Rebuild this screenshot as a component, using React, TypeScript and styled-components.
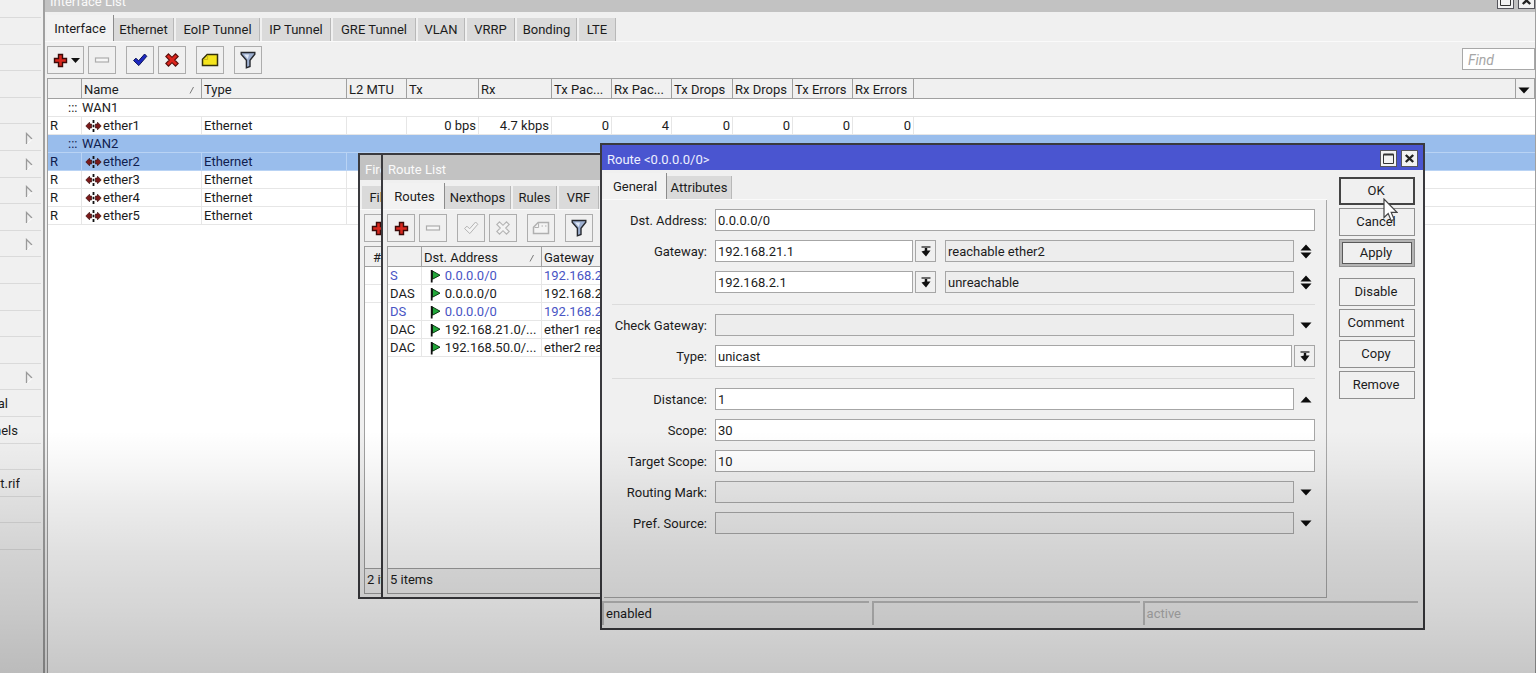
import React, { ReactNode } from "react";
import styled, { createGlobalStyle, css } from "styled-components";

const GlobalStyle = createGlobalStyle`
  * { box-sizing: border-box; }
  html, body, #root { height: 100%; }
  body {
    margin: 0;
    overflow: hidden;
    background: #f0f0f0;
    color: #1c1c1c;
    font: 13px/18px Roboto, "Liberation Sans", sans-serif;
  }
  button, input { font: inherit; color: inherit; }
`;

/* ---------- desktop ---------- */

const Desktop = styled.div`
  position: relative;
  display: flex;
  height: 100vh;
  overflow: hidden;
`;

const Shade = styled.div`
  position: absolute;
  inset: 0;
  z-index: 10;
  pointer-events: none;
  background: linear-gradient(
    to bottom,
    rgba(0, 0, 0, 0) 64%,
    rgba(0, 0, 0, 0.03) 69%,
    rgba(0, 0, 0, 0.07) 74%,
    rgba(0, 0, 0, 0.12) 82%,
    rgba(0, 0, 0, 0.16) 90%,
    rgba(0, 0, 0, 0.22) 100%
  );
`;

const SideMenu = styled.nav`
  flex: none;
  width: 43px;
  height: 550px;
  display: grid;
  grid-template-rows: 18px repeat(20, 1fr);
`;

const SideItem = styled.div`
  display: flex;
  align-items: center;
  justify-content: space-between;
  margin-right: 2px;
  padding: 2px 8px 0 0;
  border-bottom: 1px solid #dadada;
  overflow: hidden;
`;

const SideLabel = styled.span<{ $w: number }>`
  display: flex;
  justify-content: flex-end;
  width: ${(p) => p.$w}px;
  overflow: hidden;
  white-space: nowrap;
`;

/* ---------- window parts ---------- */

const frame = css`
  display: flex;
  flex-direction: column;
  background: #f0f0f0;
`;

const MainWindow = styled.section`
  ${frame}
  flex: 1;
  min-width: 0;
  margin-top: -13px;
  border: 1px solid #a0a0a0;
  border-width: 0 1px 0 2px;
`;

const FloatWindow = styled.section<{ $x: number; $y: number; $w: number; $h: number }>`
  ${frame}
  position: absolute;
  left: ${(p) => p.$x}px;
  top: ${(p) => p.$y}px;
  width: ${(p) => p.$w}px;
  height: ${(p) => p.$h}px;
  border: 2px solid #3a3a3e;
`;

const TitleBar = styled.header<{ $active?: boolean; $flush?: boolean }>`
  flex: none;
  display: flex;
  align-items: center;
  height: 25px;
  padding: 5px ${(p) => (p.$flush ? 0 : 5)}px 0 5px;
  background: ${(p) => (p.$active ? "#4a55d0" : "#c2c2c2")};
  color: ${(p) => (p.$active ? "#eef0ff" : "#fafafa")};
  white-space: nowrap;
`;

const TitleText = styled.h1`
  flex: 1;
  margin: 0;
  font-size: 13px;
  font-weight: 400;
`;

const TitleButton = styled.button`
  display: flex;
  align-items: center;
  justify-content: center;
  width: 17px;
  height: 17px;
  margin: 0 0 4px 4px;
  padding: 0;
  border: 1px solid #55555c;
  background: #f2f2f2;
`;

const TabBar = styled.div`
  flex: none;
  display: flex;
  height: 30px;
  padding: 3px 0 0 2px;
  border-bottom: 1px solid #fafafa;
`;

const Tab = styled.button<{ $w: number; $active?: boolean }>`
  flex: none;
  width: ${(p) => p.$w}px;
  margin: ${(p) => (p.$active ? 0 : "3px 2px 0 0")};
  padding: 1px 0 0;
  border: 0;
  border-right: 1px solid ${(p) => (p.$active ? "#8c8c8c" : "#b8b8b8")};
  background: ${(p) => (p.$active ? "#f2f2f2" : "#dadada")};
  text-align: center;
  white-space: nowrap;
`;

const Toolbar = styled.div<{ $inset: number }>`
  flex: none;
  display: flex;
  gap: 4px;
  padding: 4px 0 4px ${(p) => p.$inset}px;
`;

const ToolButton = styled.button<{ $wide?: boolean; $group?: boolean }>`
  flex: none;
  display: flex;
  align-items: center;
  justify-content: center;
  gap: 2px;
  width: ${(p) => (p.$wide ? 37 : 28)}px;
  height: 28px;
  margin-left: ${(p) => (p.$group ? 6 : 0)}px;
  padding: 0;
  border: 1px solid #adadad;
  background: #f0f0f0;
`;

const FindBox = styled.input`
  width: 73px;
  height: 22px;
  margin: 2px 0 0 auto;
  padding: 2px 5px 0;
  border: 1px solid #a8a8a8;
  background: #fff;
  font-size: 14px;
  font-style: italic;
  &::placeholder { color: #a6a6a6; opacity: 1; }
`;

/* ---------- lists ---------- */

const ListPane = styled.div<{ $inset: number }>`
  flex: 1;
  min-height: 0;
  margin-left: ${(p) => p.$inset}px;
  border-left: 1px solid #a0a0a0;
  background: #fff;
  overflow: hidden;
`;

const Grid = styled.table`
  width: 100%;
  table-layout: fixed;
  border-collapse: separate;
  border-spacing: 0;
  white-space: nowrap;
`;

const HeadCell = styled.th`
  height: 21px;
  padding: 2px 2px 0;
  border: 0 solid #a0a0a0;
  border-width: 1px 1px 1px 0;
  background: #f0f0f0;
  font-weight: 400;
  line-height: 16px;
  text-align: left;
  overflow: hidden;
`;

const HeadFlex = styled.span`
  display: flex;
  align-items: center;
  justify-content: space-between;
  padding-right: 4px;
`;

const Row = styled.tr<{ $selected?: boolean; $blue?: boolean }>`
  background: ${(p) => (p.$selected ? "#99bdec" : "#fff")};
  color: ${(p) => (p.$selected ? "#10204e" : p.$blue ? "#4854c4" : "inherit")};
  --line: ${(p) => (p.$selected ? "#b9d3f4" : "#e6e6e6")};
`;

const Cell = styled.td<{ $right?: boolean; $plain?: boolean }>`
  height: 18px;
  padding: 1px 2px 0;
  border: 0 solid var(--line);
  border-width: ${(p) => (p.$plain ? "0 0 1px" : "0 1px 1px 0")};
  line-height: 16px;
  text-align: ${(p) => (p.$right ? "right" : "left")};
  overflow: hidden;
`;

const IconText = styled.span<{ $pad?: number }>`
  display: flex;
  align-items: center;
  gap: 1px;
  padding-left: ${(p) => p.$pad ?? 1}px;
`;

const CommentMark = styled.span`
  display: inline-block;
  width: 14px;
  margin-left: 18px;
`;

const CountBar = styled.footer`
  flex: none;
  height: 26px;
  margin: 0 0 3px 4px;
  padding: 2px 2px 0;
  border: 1px solid #a0a0a0;
  border-right: 0;
  white-space: nowrap;
  overflow: hidden;
`;

/* ---------- route form ---------- */

const DialogBody = styled.div`
  flex: 1;
  display: flex;
  min-height: 0;
`;

const FormSide = styled.div`
  flex: 1;
  display: flex;
  flex-direction: column;
`;

const Form = styled.form`
  flex: 1;
  display: flex;
  flex-direction: column;
  gap: 9px;
  margin-left: 2px;
  padding: 9px 11px 0 8px;
  border: 1px solid #a8a8a8;
  border-width: 0 1px 1px 0;
`;

const FormRow = styled.div`
  display: grid;
  grid-template-columns: 95px 1fr;
  column-gap: 8px;
  align-items: center;
`;

const Label = styled.label`
  text-align: right;
  padding-top: 1px;
  white-space: nowrap;
`;

const Fields = styled.div`
  display: flex;
`;

const TextBox = styled.input<{ $w?: number; $off?: boolean }>`
  flex: ${(p) => (p.$w ? "none" : "1")};
  width: ${(p) => (p.$w ? p.$w + "px" : "auto")};
  min-width: 0;
  height: 22px;
  padding: 1px 2px 0;
  border: 1px solid #a6a6a6;
  border-radius: 0;
  outline: 0;
  background: ${(p) => (p.$off ? "#ededed" : "#fff")};
`;

const DropButton = styled.button`
  display: flex;
  align-items: center;
  justify-content: center;
  width: 21px;
  height: 22px;
  margin-left: 2px;
  padding: 0;
  border: 1px solid #a6a6a6;
  background: #f0f0f0;
`;

const ArrowButton = styled.button`
  display: flex;
  align-items: center;
  justify-content: center;
  width: 21px;
  height: 22px;
  padding: 1px 0 0 3px;
  border: 0;
  background: none;
`;

const Gap = styled.span`
  width: 9px;
`;

const Separator = styled.hr`
  width: 100%;
  height: 3px;
  margin: 0;
  border: 0;
  border-bottom: 1px solid #dcdcdc;
`;

const Actions = styled.div`
  flex: none;
  display: flex;
  flex-direction: column;
  gap: 3px;
  width: 96px;
  padding: 7px 8px 0 12px;
`;

const ActionButton = styled.button<{ $kind?: "default" | "focus"; $group?: boolean }>`
  height: 28px;
  margin-top: ${(p) => (p.$group ? 8 : 0)}px;
  padding: 0 2px 0 0;
  background: #f0f0f0;
  border: ${(p) => (p.$kind === "default" ? "2px solid #444" : "1px solid #8f8f8f")};
  ${(p) =>
    p.$kind === "focus" &&
    css`
      border: 3px solid #b4b4b4;
      outline: 1px solid #8f8f8f;
      outline-offset: -1px;
      box-shadow: inset 0 0 0 1px #5a5a5a;
    `}
`;

const StatusBar = styled.footer`
  flex: none;
  display: grid;
  grid-template-columns: 33fr 33fr 34fr;
  gap: 3px;
  padding: 3px 5px 3px 0;
`;

const StatusCell = styled.span<{ $dim?: boolean }>`
  height: 24px;
  padding: 2px 2px 0;
  border: 0 solid #bdbdbd;
  border-width: 2px 0 0 2px;
  color: ${(p) => (p.$dim ? "#b4b4b4" : "inherit")};
`;

const Pointer = styled.svg`
  position: absolute;
  left: 1383px;
  top: 198px;
  z-index: 5;
`;

/* ---------- drawings ---------- */

const Plus = () => (
  <svg width="17" height="17" viewBox="0 0 17 17">
    <path d="M6.500 2.500h4v4h4v4h-4v4h-4v-4h-4v-4h4z" fill="#d8281e" stroke="#3c0a08" strokeWidth="1.400" />
  </svg>
);
const Minus = () => (
  <svg width="16" height="16" viewBox="0 0 16 16">
    <rect x="1.500" y="6" width="13" height="4" fill="#f6f6f6" stroke="#adadad" strokeWidth="1.200" />
  </svg>
);
const Check = ({ off }: { off?: boolean }) => (
  <svg width="16" height="16" viewBox="0 0 16 16">
    <path
      d="M1.500 8.500 4 6.200l2.600 2.600L12.600 2l2.200 2.300L6.800 13.600z"
      fill={off ? "#f4f4f4" : "#1c28c0"}
      stroke={off ? "#b4b4b4" : "#0c1458"}
      strokeWidth="1"
    />
  </svg>
);
const Cross = ({ off }: { off?: boolean }) => (
  <svg width="16" height="16" viewBox="0 0 16 16">
    <path
      d="M4.500 1.800 8 5.300l3.500-3.500 2.700 2.700L10.700 8l3.500 3.500-2.700 2.700L8 10.700l-3.500 3.500-2.700-2.700L5.300 8 1.800 4.500z"
      fill={off ? "#f4f4f4" : "#dc241c"}
      stroke={off ? "#b4b4b4" : "#5c100c"}
      strokeWidth="1.100"
    />
  </svg>
);
const Note = ({ off }: { off?: boolean }) => (
  <svg width="18" height="16" viewBox="0 0 18 16">
    <path
      d="M6.200 2.500h10.300v11H1.500V7.200z"
      fill={off ? "#f4f4f4" : "#f4e41c"}
      stroke={off ? "#b0b0b0" : "#33300c"}
      strokeWidth="1.500"
    />
    <path d="M2.500 7.500h4.100V3.200" fill="none" stroke={off ? "#b0b0b0" : "#c8b81c"} strokeWidth="1" />
    {off && <path d="M9.500 6h1.500M13 6h1.500" stroke="#b0b0b0" />}
  </svg>
);
const Funnel = () => (
  <svg width="16" height="18" viewBox="0 0 16 18">
    <path d="M1.200 1.500h13.600v1.800L10 9.200v6.300l-3.600 1.300V9.200L1.200 3.300z" fill="#9dafd0" stroke="#26282e" strokeWidth="1.400" />
    <path d="M4 3.500h5L7.800 8z" fill="#dfe8f6" />
  </svg>
);
const Ether = () => (
  <svg width="17" height="14" viewBox="0 0 17 14">
    <path d="M.8 7 4.500 3.200V5h2v4h-2v1.800z" fill="#7c1a1a" stroke="#3a0e0e" strokeWidth=".7" />
    <path d="M16.200 7 12.500 3.200V5h-2v4h2v1.800z" fill="#7c1a1a" stroke="#3a0e0e" strokeWidth=".7" />
    <path d="M8.500 1v3M8.500 5.800v2.400M8.500 10v3" stroke="#111" strokeWidth="1.800" />
  </svg>
);
const Flag = () => (
  <svg width="11" height="14" viewBox="0 0 11 14">
    <path d="M2.500 2 10 6.200 2.500 10.200z" fill="#22a83a" stroke="#0c3c14" strokeWidth="1" />
    <path d="M1.700 1v12.500" stroke="#111" strokeWidth="1.800" />
  </svg>
);
const SortMark = () => (
  <svg width="6" height="8" viewBox="0 0 6 8">
    <path d="M1 7.500 4.500 1" stroke="#7a7a7a" fill="none" />
  </svg>
);
const SubMark = () => (
  <svg width="8" height="13" viewBox="0 0 8 13">
    <path d="M1.500 12V1.500L7 7" stroke="#9a9a9a" strokeWidth="1.300" fill="none" />
    <path d="M2.500 11.500 7 7.500" stroke="#fff" fill="none" />
  </svg>
);
const Tri = ({ up }: { up?: boolean }) => (
  <svg width="12" height="7" viewBox="0 0 12 7">
    <path d={up ? "M.5 6.500h11L6 .5z" : "M.5.5h11L6 6.500z"} fill="#0c0c0c" />
  </svg>
);
const TinyTri = () => (
  <svg width="9" height="5" viewBox="0 0 9 5">
    <path d="M0 0h9L4.500 5z" fill="#111" />
  </svg>
);
const UpDown = () => (
  <svg width="12" height="15" viewBox="0 0 12 15">
    <path d="M.5 6.500h11L6 .5zM.5 8.500h11L6 14.500z" fill="#0c0c0c" />
  </svg>
);
const DropMark = () => (
  <svg width="10" height="11" viewBox="0 0 10 11">
    <path d="M.5 1h9" stroke="#222" strokeWidth="1.300" />
    <path d="M3.800 2h2.400v2.500H9.500L5 10.500.5 5.500 3.800 4.500z" fill="#111" />
  </svg>
);
const MaxMark = () => (
  <svg width="11" height="11" viewBox="0 0 11 11">
    <path d="M.5 1.500h10v9H.5z" fill="none" stroke="#333" />
    <path d="M.5 1.500h10" stroke="#333" strokeWidth="2" />
  </svg>
);
const CloseMark = () => (
  <svg width="11" height="11" viewBox="0 0 11 11">
    <path d="M1.800 2l7.400 7M9.200 2l-7.400 7" stroke="#222" strokeWidth="2.400" />
  </svg>
);

/* ---------- data ---------- */

const sideRows: { label?: string; w?: number; sub?: boolean }[] = Array.from({ length: 21 }, (_, i) => {
  if ([5, 6, 7, 8, 9, 14].includes(i)) return { sub: true };
  if (i === 15) return { label: "al", w: 8 };
  if (i === 16) return { label: "nels", w: 18 };
  if (i === 18) return { label: "ut.rif", w: 20 };
  return {};
});

const mainTabs: [string, number][] = [
  ["Interface", 67],
  ["Ethernet", 60],
  ["EoIP Tunnel", 84],
  ["IP Tunnel", 69],
  ["GRE Tunnel", 83],
  ["VLAN", 47],
  ["VRRP", 48],
  ["Bonding", 60],
  ["LTE", 37],
];

const mainCols: [string, number][] = [
  ["", 34],
  ["Name", 120],
  ["Type", 145],
  ["L2 MTU", 60],
  ["Tx", 72],
  ["Rx", 73],
  ["Tx Pac...", 60],
  ["Rx Pac...", 60],
  ["Tx Drops", 61],
  ["Rx Drops", 60],
  ["Tx Errors", 60],
  ["Rx Errors", 61],
];

const interfaces = [
  { name: "ether1", comment: "WAN1", stats: ["0 bps", "4.7 kbps", "0", "4", "0", "0", "0", "0"] },
  { name: "ether2", comment: "WAN2", selected: true },
  { name: "ether3" },
  { name: "ether4" },
  { name: "ether5" },
] as { name: string; comment?: string; selected?: boolean; stats?: string[] }[];

const routes = [
  { flags: "S", dst: "0.0.0.0/0", gw: "192.168.21.1", blue: true },
  { flags: "DAS", dst: "0.0.0.0/0", gw: "192.168.21.1" },
  { flags: "DS", dst: "0.0.0.0/0", gw: "192.168.2.1", blue: true },
  { flags: "DAC", dst: "192.168.21.0/...", gw: "ether1 reachable" },
  { flags: "DAC", dst: "192.168.50.0/...", gw: "ether2 reachable" },
];

/* ---------- composed pieces ---------- */

const WindowButtons = () => (
  <>
    <TitleButton aria-label="Maximize"><MaxMark /></TitleButton>
    <TitleButton aria-label="Close"><CloseMark /></TitleButton>
  </>
);

const Tabs = ({ items }: { items: [string, number][] }) => (
  <TabBar>
    {items.map(([t, w], i) => (
      <Tab key={t} $w={w} $active={i === 0}>{t}</Tab>
    ))}
  </TabBar>
);

const Field = ({ id, label, children }: { id: string; label: string; children: ReactNode }) => (
  <FormRow>
    <Label htmlFor={id}>{label}</Label>
    <Fields>{children}</Fields>
  </FormRow>
);

const InterfaceTable = () => (
  <Grid>
    <colgroup>
      {mainCols.map(([n, w]) => <col key={n} width={w} />)}
      <col />
      <col width={19} />
    </colgroup>
    <thead>
      <tr>
        {mainCols.map(([n]) => (
          <HeadCell key={n}>{n === "Name" ? <HeadFlex>{n}<SortMark /></HeadFlex> : n}</HeadCell>
        ))}
        <HeadCell />
        <HeadCell><Tri /></HeadCell>
      </tr>
    </thead>
    <tbody>
      {interfaces.map((r) => (
        <React.Fragment key={r.name}>
          {r.comment && (
            <Row $selected={r.selected}>
              <Cell colSpan={14} $plain><CommentMark>:::</CommentMark>{r.comment}</Cell>
            </Row>
          )}
          <Row $selected={r.selected}>
            <Cell>R</Cell>
            <Cell><IconText><Ether />{r.name}</IconText></Cell>
            <Cell>Ethernet</Cell>
            <Cell />
            {Array.from({ length: 8 }, (_, i) => (
              <Cell key={i} $right>{r.stats?.[i]}</Cell>
            ))}
            <Cell colSpan={2} $plain />
          </Row>
        </React.Fragment>
      ))}
    </tbody>
  </Grid>
);

const RouteTable = () => (
  <Grid>
    <colgroup>
      <col width={34} />
      <col width={120} />
      <col />
    </colgroup>
    <thead>
      <tr>
        <HeadCell />
        <HeadCell><HeadFlex>Dst. Address<SortMark /></HeadFlex></HeadCell>
        <HeadCell>Gateway</HeadCell>
      </tr>
    </thead>
    <tbody>
      {routes.map((r, i) => (
        <Row key={i} $blue={r.blue}>
          <Cell>{r.flags}</Cell>
          <Cell><IconText $pad={6}><Flag /><span>&thinsp;{r.dst}</span></IconText></Cell>
          <Cell>{r.gw}</Cell>
        </Row>
      ))}
    </tbody>
  </Grid>
);

export default function App() {
  return (
    <>
      <GlobalStyle />
      <Desktop>
        <SideMenu>
          {sideRows.map((r, i) => (
            <SideItem key={i}>
              <SideLabel $w={r.w ?? 0}>{r.label}</SideLabel>
              {r.sub && <SubMark />}
            </SideItem>
          ))}
        </SideMenu>

        <MainWindow>
          <TitleBar $flush>
            <TitleText>Interface List</TitleText>
            <WindowButtons />
          </TitleBar>
          <Tabs items={mainTabs} />
          <Toolbar $inset={2}>
            <ToolButton $wide aria-label="Add"><Plus /><TinyTri /></ToolButton>
            <ToolButton aria-label="Remove"><Minus /></ToolButton>
            <ToolButton $group aria-label="Enable"><Check /></ToolButton>
            <ToolButton aria-label="Disable"><Cross /></ToolButton>
            <ToolButton $group aria-label="Comment"><Note /></ToolButton>
            <ToolButton $group aria-label="Filter"><Funnel /></ToolButton>
            <FindBox placeholder="Find" aria-label="Find" />
          </Toolbar>
          <ListPane $inset={2}><InterfaceTable /></ListPane>
        </MainWindow>

        <FloatWindow $x={358} $y={153} $w={300} $h={446}>
          <TitleBar><TitleText>Firewall</TitleText></TitleBar>
          <TabBar><Tab $w={80}>Filter Rules</Tab></TabBar>
          <Toolbar $inset={4}><ToolButton aria-label="Add"><Plus /></ToolButton></Toolbar>
          <ListPane $inset={4}>
            <Grid>
              <thead><tr><HeadCell><IconText $pad={6}>#</IconText></HeadCell></tr></thead>
              <tbody>
                <Row><Cell /></Row>
                <Row><Cell /></Row>
              </tbody>
            </Grid>
          </ListPane>
          <CountBar>2 items</CountBar>
        </FloatWindow>

        <FloatWindow $x={381} $y={153} $w={300} $h={446}>
          <TitleBar><TitleText>Route List</TitleText></TitleBar>
          <Tabs items={[["Routes", 60], ["Nexthops", 66], ["Rules", 44], ["VRF", 40]]} />
          <Toolbar $inset={4}>
            <ToolButton aria-label="Add"><Plus /></ToolButton>
            <ToolButton aria-label="Remove"><Minus /></ToolButton>
            <ToolButton $group aria-label="Enable"><Check off /></ToolButton>
            <ToolButton aria-label="Disable"><Cross off /></ToolButton>
            <ToolButton $group aria-label="Comment"><Note off /></ToolButton>
            <ToolButton $group aria-label="Filter"><Funnel /></ToolButton>
          </Toolbar>
          <ListPane $inset={4}><RouteTable /></ListPane>
          <CountBar>5 items</CountBar>
        </FloatWindow>

        <FloatWindow $x={600} $y={143} $w={825} $h={487}>
          <TitleBar $active>
            <TitleText>Route &lt;0.0.0.0/0&gt;</TitleText>
            <WindowButtons />
          </TitleBar>
          <DialogBody>
            <FormSide>
              <Tabs items={[["General", 63], ["Attributes", 65]]} />
              <Form>
                <Field id="dst" label="Dst. Address:">
                  <TextBox id="dst" defaultValue="0.0.0.0/0" />
                </Field>
                <Field id="gw1" label="Gateway:">
                  <TextBox id="gw1" $w={198} defaultValue="192.168.21.1" />
                  <DropButton type="button" aria-label="Choose gateway"><DropMark /></DropButton>
                  <Gap />
                  <TextBox $off readOnly aria-label="Gateway state" value="reachable ether2" />
                  <ArrowButton type="button" aria-label="Add or remove"><UpDown /></ArrowButton>
                </Field>
                <Field id="gw2" label="">
                  <TextBox id="gw2" $w={198} defaultValue="192.168.2.1" />
                  <DropButton type="button" aria-label="Choose gateway"><DropMark /></DropButton>
                  <Gap />
                  <TextBox $off readOnly aria-label="Gateway state" value="unreachable" />
                  <ArrowButton type="button" aria-label="Add or remove"><UpDown /></ArrowButton>
                </Field>
                <Separator />
                <Field id="check" label="Check Gateway:">
                  <TextBox id="check" $off />
                  <ArrowButton type="button" aria-label="Expand"><Tri /></ArrowButton>
                </Field>
                <Field id="type" label="Type:">
                  <TextBox id="type" defaultValue="unicast" />
                  <DropButton type="button" aria-label="Choose type"><DropMark /></DropButton>
                </Field>
                <Separator />
                <Field id="distance" label="Distance:">
                  <TextBox id="distance" defaultValue="1" />
                  <ArrowButton type="button" aria-label="Collapse"><Tri up /></ArrowButton>
                </Field>
                <Field id="scope" label="Scope:">
                  <TextBox id="scope" defaultValue="30" />
                </Field>
                <Field id="target" label="Target Scope:">
                  <TextBox id="target" defaultValue="10" />
                </Field>
                <Field id="mark" label="Routing Mark:">
                  <TextBox id="mark" $off />
                  <ArrowButton type="button" aria-label="Expand"><Tri /></ArrowButton>
                </Field>
                <Field id="pref" label="Pref. Source:">
                  <TextBox id="pref" $off />
                  <ArrowButton type="button" aria-label="Expand"><Tri /></ArrowButton>
                </Field>
              </Form>
            </FormSide>
            <Actions>
              <ActionButton $kind="default">OK</ActionButton>
              <ActionButton>Cancel</ActionButton>
              <ActionButton $kind="focus">Apply</ActionButton>
              <ActionButton $group>Disable</ActionButton>
              <ActionButton>Comment</ActionButton>
              <ActionButton>Copy</ActionButton>
              <ActionButton>Remove</ActionButton>
            </Actions>
          </DialogBody>
          <StatusBar>
            <StatusCell>enabled</StatusCell>
            <StatusCell />
            <StatusCell $dim>active</StatusCell>
          </StatusBar>
        </FloatWindow>

        <Pointer width="15" height="24" viewBox="0 0 15 24">
          <path d="M1 1v18.500l4.200-4 3 7.200 3-1.300-3-7H14z" fill="#fff" stroke="#444" strokeWidth="1.200" />
        </Pointer>
        <Shade />
      </Desktop>
    </>
  );
}
